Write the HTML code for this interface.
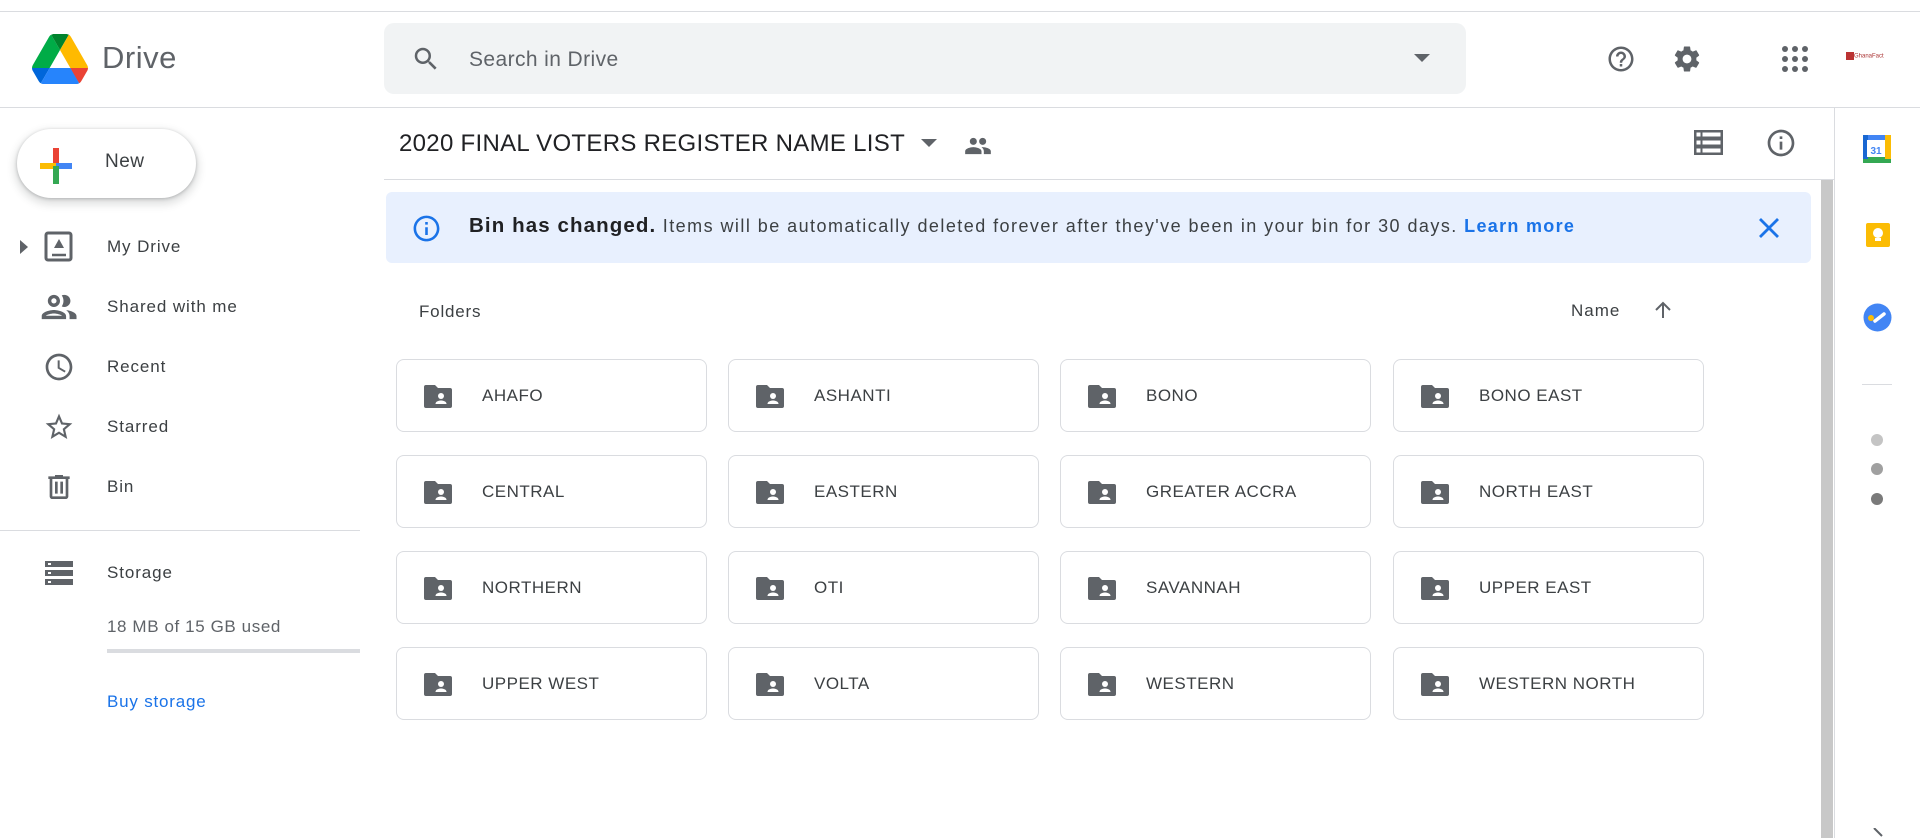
<!DOCTYPE html>
<html><head><meta charset="utf-8"><style>
*{box-sizing:border-box;margin:0;padding:0}
body{width:1920px;height:838px;overflow:hidden;background:#fff;font-family:"Liberation Sans",Arial,sans-serif;color:#3c4043;position:relative}
.abs{position:absolute}
.line{position:absolute;background:#dadce0}
.nav{position:absolute;left:0;width:360px;height:40px;display:flex;align-items:center}
.nav svg{position:absolute;left:43px}
.nav span{position:absolute;left:107px;font-size:17px;color:#3c4043;letter-spacing:0.9px}
.card{position:absolute;width:311px;height:73px;border:1px solid #dadce0;border-radius:8px;display:flex;align-items:center}
.card svg{position:absolute;left:27px;top:25px}
.card span{position:absolute;left:85px;font-size:17px;color:#3c4043;letter-spacing:0.5px}
</style></head><body>
<div class="line" style="left:0;top:11px;width:1920px;height:1px"></div>
<div class="line" style="left:0;top:107px;width:1920px;height:1px"></div>
<svg class="abs" style="left:32px;top:34px" width="56" height="50" viewBox="0 0 87.3 78">
<path d="m6.6 66.85 3.85 6.65c.8 1.4 1.950 2.5 3.3 3.3l13.75-23.8h-27.5c0 1.55.4 3.1 1.2 4.5z" fill="#0066da"/>
<path d="m43.65 25-13.75-23.8c-1.35.8-2.5 1.9-3.3 3.3l-25.4 44a9.06 9.06 0 0 0 -1.2 4.5h27.5z" fill="#00ac47"/>
<path d="m73.55 76.8c1.35-.8 2.5-1.9 3.3-3.3l1.6-2.75 7.65-13.25c.8-1.4 1.2-2.95 1.2-4.5h-27.502l5.852 11.5z" fill="#ea4335"/>
<path d="m43.65 25 13.75-23.8c-1.35-.8-2.9-1.2-4.5-1.2h-18.5c-1.6 0-3.15.45-4.5 1.2z" fill="#00832d"/>
<path d="m59.8 53h-32.3l-13.75 23.8c1.35.8 2.9 1.2 4.5 1.2h50.8c1.6 0 3.15-.45 4.5-1.2z" fill="#2684fc"/>
<path d="m73.4 26.5-12.7-22c-.8-1.4-1.95-2.5-3.3-3.3l-13.75 23.8 16.150 28h27.45c0-1.55-.4-3.1-1.2-4.5z" fill="#ffba00"/>
</svg>
<div class="abs" style="left:102px;top:40px;font-size:31px;color:#5f6368;letter-spacing:0.5px">Drive</div>
<div class="abs" style="left:384px;top:23px;width:1082px;height:71px;background:#f1f3f4;border-radius:10px"></div>
<svg class="abs" style="left:411px;top:44px" width="30" height="30" viewBox="0 0 24 24"><path fill="#5f6368" d="M15.5 14h-.79l-.28-.27A6.47 6.47 0 0 0 16 9.5 6.5 6.5 0 1 0 9.5 16c1.61 0 3.09-.59 4.23-1.570l.27.28v.79l5 4.99L20.49 19l-4.99-5zm-6 0C7.01 14 5 11.99 5 9.5S7.01 5 9.5 5 14 7.01 14 9.5 11.99 14 9.5 14z"/></svg>
<div class="abs" style="left:469px;top:48px;font-size:21px;color:#5f6368;letter-spacing:0.4px">Search in Drive</div>
<svg class="abs" style="left:1414px;top:54px" width="16" height="8"><path d="M0 0h16L8 8z" fill="#5f6368"/></svg>
<svg class="abs" style="left:1606px;top:44px" width="30" height="30" viewBox="0 0 24 24"><path fill="#5f6368" d="M11 18h2v-2h-2v2zm1-16C6.48 2 2 6.48 2 12s4.48 10 10 10 10-4.480 10-10S17.52 2 12 2zm0 18c-4.41 0-8-3.59-8-8s3.59-8 8-8 8 3.59 8 8-3.59 8-8 8zm0-14c-2.21 0-4 1.79-4 4h2c0-1.1.9-2 2-2s2 .9 2 2c0 2-3 1.75-3 5h2c0-2.25 3-2.5 3-5 0-2.21-1.79-4-4-4z"/></svg>
<svg class="abs" style="left:1672px;top:44px" width="30" height="30" viewBox="0 0 24 24"><path fill="#5f6368" d="M19.43 12.98c.04-.32.07-.64.07-.98s-.03-.66-.07-.98l2.11-1.65c.19-.15.24-.42.12-.64l-2-3.46c-.12-.22-.39-.3-.61-.22l-2.490 1c-.52-.4-1.08-.73-1.69-.98l-.38-2.65A.488.488 0 0 0 14 2h-4c-.25 0-.46.18-.49.42l-.38 2.65c-.61.25-1.17.59-1.69.98l-2.49-1c-.23-.09-.49 0-.61.22l-2 3.46c-.13.22-.07.49.12.64l2.11 1.65c-.04.32-.07.65-.07.98s.03.66.07.98l-2.11 1.65c-.19.15-.24.42-.12.64l2 3.46c.12.22.39.3.61.22l2.49-1c.52.4 1.08.73 1.69.98l.38 2.65c.03.24.24.42.49.42h4c.25 0 .46-.18.49-.42l.38-2.65c.61-.25 1.17-.59 1.69-.98l2.49 1c.23.09.49 0 .61-.22l2-3.46c.12-.22.07-.49-.12-.64l-2.11-1.65zM12 15.5c-1.93 0-3.5-1.57-3.5-3.5s1.57-3.5 3.5-3.5 3.5 1.57 3.5 3.5-1.57 3.5-3.5 3.5z"/></svg>
<svg class="abs" style="left:1782px;top:46px" width="26" height="26" viewBox="0 0 26 26" fill="#5f6368"><circle cx="3" cy="3" r="3"/><circle cx="13" cy="3" r="3"/><circle cx="23" cy="3" r="3"/><circle cx="3" cy="13" r="3"/><circle cx="13" cy="13" r="3"/><circle cx="23" cy="13" r="3"/><circle cx="3" cy="23" r="3"/><circle cx="13" cy="23" r="3"/><circle cx="23" cy="23" r="3"/></svg>
<div class="abs" style="left:1846px;top:52px;width:44px;height:10px;font-size:6px;color:#a33"><span style="display:inline-block;width:8px;height:8px;background:#b33;vertical-align:middle"></span>GhanaFact</div>
<div class="abs" style="left:17px;top:129px;width:179px;height:69px;border-radius:35px;background:#fff;box-shadow:0 1px 3px rgba(60,64,67,.3),0 4px 8px 3px rgba(60,64,67,.15)"></div>
<svg class="abs" style="left:40px;top:148px" width="32" height="36" viewBox="0 0 32 36"><rect x="13" y="0" width="6" height="18" fill="#ea4335"/><rect x="0" y="15" width="16" height="6" fill="#fbbc04"/><rect x="16" y="15" width="16" height="6" fill="#4285f4"/><rect x="13" y="18" width="6" height="18" fill="#34a853"/></svg>
<div class="abs" style="left:105px;top:151px;font-size:19px;color:#3c4043;letter-spacing:0.5px">New</div>
<svg class="abs" style="left:20px;top:240px" width="8" height="14"><path d="M0 0l8 7-8 7z" fill="#5f6368"/></svg>
<div class="nav" style="top:227px"><svg width="30" height="32" viewBox="0 0 30 32" style="left:44px"><rect x="2" y="2" width="25" height="27" rx="2" fill="none" stroke="#5f6368" stroke-width="3"/><path d="M8 24h14" stroke="#5f6368" stroke-width="2.5"/><path d="M15 8l5 9H10z" fill="#5f6368"/></svg><span>My Drive</span></div>
<div class="nav" style="top:287px"><svg width="40" height="36" viewBox="1 3 23 18" style="left:40px"><path fill="#5f6368" d="M9 13.75c-2.34 0-7 1.17-7 3.5V19h14v-1.75c0-2.33-4.66-3.5-7-3.5zM4.34 17c.84-.58 2.87-1.25 4.66-1.25s3.82.67 4.66 1.25H4.34zM9 12c1.93 0 3.5-1.57 3.5-3.5S10.93 5 9 5 5.5 6.57 5.5 8.5 7.07 12 9 12zm0-5c.83 0 1.5.67 1.5 1.5S9.83 10 9 10s-1.5-.67-1.5-1.5S8.17 7 9 7zm7.04 6.81c1.16.84 1.96 1.96 1.96 3.44V19h4v-1.75c0-2.02-3.5-3.17-5.96-3.44zM15 12c1.93 0 3.5-1.57 3.5-3.5S16.93 5 15 5c-.54 0-1.04.13-1.5.35.63.89 1 1.98 1 3.15s-.37 2.26-1 3.15c.46.22.96.35 1.5.35z"/></svg><span>Shared with me</span></div>
<div class="nav" style="top:347px"><svg width="32" height="32" viewBox="0 0 24 24" style="left:43px"><path fill="#5f6368" d="M11.99 2C6.47 2 2 6.48 2 12s4.47 10 9.99 10C17.52 22 22 17.52 22 12S17.52 2 11.99 2zM12 20c-4.42 0-8-3.58-8-8s3.58-8 8-8 8 3.58 8 8-3.58 8-8 8zm.5-13H11v6l5.25 3.15.75-1.23-4.5-2.67z"/></svg><span>Recent</span></div>
<div class="nav" style="top:407px"><svg width="32" height="32" viewBox="0 0 24 24" style="left:43px"><path fill="#5f6368" d="M22 9.24l-7.19-.62L12 2 9.19 8.63 2 9.24l5.46 4.73L5.82 21 12 17.27 18.18 21l-1.63-7.03L22 9.24zM12 15.4l-3.76 2.27 1-4.28-3.32-2.88 4.38-.38L12 6.1l1.71 4.04 4.38.38-3.32 2.88 1 4.28L12 15.4z"/></svg><span>Starred</span></div>
<div class="nav" style="top:467px"><svg width="32" height="32" viewBox="0 0 24 24" style="left:43px"><path fill="#5f6368" d="M15 4V3H9v1H4v2h1v13c0 1.1.9 2 2 2h10c1.1 0 2-.9 2-2V6h1V4h-5zm2 15H7V6h10v13zM9 8h2v9H9zm4 0h2v9h-2z"/></svg><span>Bin</span></div>
<div class="line" style="left:0;top:530px;width:360px;height:1px"></div>
<div class="nav" style="top:553px"><svg width="28" height="24" viewBox="0 0 28 24" style="left:45px"><rect y="0" width="28" height="6" fill="#5f6368"/><rect y="9" width="28" height="6" fill="#5f6368"/><rect y="18" width="28" height="6" fill="#5f6368"/><rect x="3" y="2" width="3" height="2" fill="#fff"/><rect x="3" y="11" width="3" height="2" fill="#fff"/><rect x="3" y="20" width="3" height="2" fill="#fff"/></svg><span>Storage</span></div>
<div class="abs" style="left:107px;top:617px;font-size:17px;color:#5f6368;letter-spacing:0.6px">18 MB of 15 GB used</div>
<div class="abs" style="left:107px;top:649px;width:253px;height:4px;background:#dadce0"></div>
<div class="abs" style="left:107px;top:692px;font-size:17px;color:#1a73e8;letter-spacing:0.8px">Buy storage</div>
<div class="abs" style="left:399px;top:130px;font-size:24px;color:#202124;letter-spacing:0.3px">2020 FINAL VOTERS REGISTER NAME LIST</div>
<svg class="abs" style="left:921px;top:139px" width="16" height="8"><path d="M0 0h16L8 8z" fill="#5f6368"/></svg>
<svg class="abs" style="left:964px;top:132px" width="28" height="28" viewBox="0 0 24 24"><path fill="#5f6368" d="M16 11c1.66 0 2.99-1.34 2.99-3S17.66 5 16 5c-1.66 0-3 1.34-3 3s1.34 3 3 3zm-8 0c1.66 0 2.99-1.34 2.99-3S9.66 5 8 5C6.34 5 5 6.34 5 8s1.34 3 3 3zm0 2c-2.33 0-7 1.17-7 3.5V19h14v-2.5c0-2.33-4.67-3.5-7-3.5zm8 0c-.29 0-.62.02-.97.05 1.16.84 1.97 1.97 1.97 3.45V19h6v-2.5c0-2.33-4.67-3.5-7-3.5z"/></svg>
<svg class="abs" style="left:1694px;top:130px" width="29" height="25" viewBox="0 0 29 25"><rect width="29" height="25" fill="#5f6368"/><rect x="2.5" y="2.5" width="4" height="4" fill="#fff"/><rect x="8.5" y="2.5" width="18" height="4" fill="#fff"/><rect x="2.5" y="10.5" width="4" height="4" fill="#fff"/><rect x="8.5" y="10.5" width="18" height="4" fill="#fff"/><rect x="2.5" y="18.5" width="4" height="4" fill="#fff"/><rect x="8.5" y="18.5" width="18" height="4" fill="#fff"/></svg>
<svg class="abs" style="left:1765px;top:127px" width="32" height="32" viewBox="0 0 24 24"><path fill="#5f6368" d="M11 7h2v2h-2zm0 4h2v6h-2zm1-9C6.48 2 2 6.48 2 12s4.48 10 10 10 10-4.48 10-10S17.52 2 12 2zm0 18c-4.41 0-8-3.59-8-8s3.59-8 8-8 8 3.59 8 8-3.59 8-8 8z"/></svg>
<div class="line" style="left:384px;top:179px;width:1450px;height:1px"></div>
<div class="line" style="left:1834px;top:107px;width:1px;height:731px"></div>
<div class="abs" style="left:1821px;top:180px;width:12px;height:658px;background:#c8c8c8"></div>
<div class="abs" style="left:386px;top:192px;width:1425px;height:71px;background:#e8f0fe;border-radius:6px"></div>
<svg class="abs" style="left:411px;top:213px" width="31" height="31" viewBox="0 0 24 24"><path fill="#1a73e8" d="M11 7h2v2h-2zm0 4h2v6h-2zm1-9C6.48 2 2 6.48 2 12s4.48 10 10 10 10-4.48 10-10S17.52 2 12 2zm0 18c-4.41 0-8-3.59-8-8s3.59-8 8-8 8 3.59 8 8-3.59 8-8 8z"/></svg>
<div class="abs" style="left:469px;top:214px;font-size:18px;color:#3c4043;white-space:nowrap;letter-spacing:1.45px"><b style="font-size:20.5px;color:#202124;letter-spacing:1.1px">Bin has changed.</b> Items will be automatically deleted forever after they've been in your bin for 30 days. <b style="color:#1a73e8;letter-spacing:1.3px">Learn more</b></div>
<svg class="abs" style="left:1758px;top:217px" width="22" height="22"><path d="M2 2l18 18M20 2L2 20" stroke="#1a73e8" stroke-width="2.8"/></svg>
<div class="abs" style="left:419px;top:302px;font-size:17px;color:#3c4043;letter-spacing:0.8px">Folders</div>
<div class="abs" style="left:1571px;top:301px;font-size:17px;color:#3c4043;letter-spacing:1px">Name</div>
<svg class="abs" style="left:1653px;top:300px" width="20" height="20" viewBox="0 0 20 20"><path d="M10 18V3M3 10l7-7 7 7" stroke="#5f6368" stroke-width="2" fill="none"/></svg>
<svg width="0" height="0" style="position:absolute"><defs><g id="fi"><path d="M2 0h9l3 3h12a2 2 0 0 1 2 2v16a2 2 0 0 1-2 2H2a2 2 0 0 1-2-2V2a2 2 0 0 1 2-2z" fill="#5f6368"/><circle cx="17" cy="11" r="3" fill="#fff"/><path d="M11.5 19c0-2.5 3-3.5 5.5-3.5s5.5 1 5.5 3.5z" fill="#fff"/></g></defs></svg>
<div class="card" style="left:396px;top:359px"><svg width="28" height="23"><use href="#fi"/></svg><span>AHAFO</span></div>
<div class="card" style="left:728px;top:359px"><svg width="28" height="23"><use href="#fi"/></svg><span>ASHANTI</span></div>
<div class="card" style="left:1060px;top:359px"><svg width="28" height="23"><use href="#fi"/></svg><span>BONO</span></div>
<div class="card" style="left:1393px;top:359px"><svg width="28" height="23"><use href="#fi"/></svg><span>BONO EAST</span></div>
<div class="card" style="left:396px;top:455px"><svg width="28" height="23"><use href="#fi"/></svg><span>CENTRAL</span></div>
<div class="card" style="left:728px;top:455px"><svg width="28" height="23"><use href="#fi"/></svg><span>EASTERN</span></div>
<div class="card" style="left:1060px;top:455px"><svg width="28" height="23"><use href="#fi"/></svg><span>GREATER ACCRA</span></div>
<div class="card" style="left:1393px;top:455px"><svg width="28" height="23"><use href="#fi"/></svg><span>NORTH EAST</span></div>
<div class="card" style="left:396px;top:551px"><svg width="28" height="23"><use href="#fi"/></svg><span>NORTHERN</span></div>
<div class="card" style="left:728px;top:551px"><svg width="28" height="23"><use href="#fi"/></svg><span>OTI</span></div>
<div class="card" style="left:1060px;top:551px"><svg width="28" height="23"><use href="#fi"/></svg><span>SAVANNAH</span></div>
<div class="card" style="left:1393px;top:551px"><svg width="28" height="23"><use href="#fi"/></svg><span>UPPER EAST</span></div>
<div class="card" style="left:396px;top:647px"><svg width="28" height="23"><use href="#fi"/></svg><span>UPPER WEST</span></div>
<div class="card" style="left:728px;top:647px"><svg width="28" height="23"><use href="#fi"/></svg><span>VOLTA</span></div>
<div class="card" style="left:1060px;top:647px"><svg width="28" height="23"><use href="#fi"/></svg><span>WESTERN</span></div>
<div class="card" style="left:1393px;top:647px"><svg width="28" height="23"><use href="#fi"/></svg><span>WESTERN NORTH</span></div>
<svg class="abs" style="left:1863px;top:135px" width="28" height="28" viewBox="0 0 28 28"><rect width="28" height="28" rx="2" fill="#4285f4"/><rect x="0" y="22" width="28" height="6" fill="#34a853"/><rect x="22" y="0" width="6" height="24" fill="#fbbc04"/><rect x="0" y="0" width="5" height="24" fill="#1967d2"/><rect x="4" y="5" width="18" height="17" fill="#fff"/><text x="13" y="19" font-size="10" fill="#4285f4" text-anchor="middle" font-family="Liberation Sans" font-weight="bold">31</text></svg>
<svg class="abs" style="left:1866px;top:223px" width="24" height="24"><rect width="24" height="24" rx="2" fill="#fbbc04"/><circle cx="12" cy="10" r="5" fill="#fff"/><rect x="9" y="15" width="6" height="3" fill="#fff"/></svg>
<svg class="abs" style="left:1863px;top:303px" width="29" height="29"><circle cx="14.5" cy="14.5" r="14" fill="#4285f4"/><circle cx="8" cy="15" r="3" fill="#fbbc04"/><path d="M12 18l9-7" stroke="#fff" stroke-width="3.5" stroke-linecap="round"/></svg>
<div class="line" style="left:1862px;top:384px;width:30px;height:1px"></div>
<div class="abs" style="left:1871px;top:434px;width:12px;height:12px;border-radius:50%;background:#c4c4c4"></div>
<div class="abs" style="left:1871px;top:463px;width:12px;height:12px;border-radius:50%;background:#a0a0a0"></div>
<div class="abs" style="left:1871px;top:493px;width:12px;height:12px;border-radius:50%;background:#7a7a7a"></div>
<svg class="abs" style="left:1872px;top:828px" width="12" height="10"><path d="M2 0l8 8" stroke="#5f6368" stroke-width="2"/></svg>
</body></html>
